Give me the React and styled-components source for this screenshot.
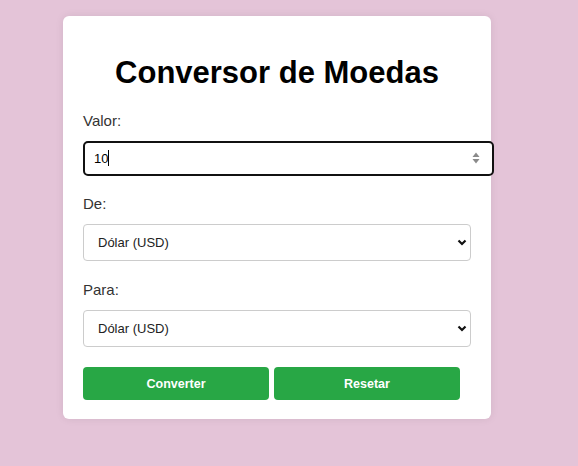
import styled, { createGlobalStyle } from "styled-components";

const GlobalStyle = createGlobalStyle`
  html, body {
    margin: 0;
    padding: 0;
    background: #e4c4d8;
    font-family: "Liberation Sans", Arial, sans-serif;
  }
`;

const Page = styled.div`
  width: 578px;
  height: 466px;
  padding-top: 16px;
  box-sizing: border-box;
`;

const Card = styled.div`
  margin-left: 63px;
  width: 428px;
  box-sizing: border-box;
  padding: 20px 20px 19px;
  background: #fff;
  border-radius: 6px;
  box-shadow: 0 0 8px rgba(0, 0, 0, 0.08);
`;

const Title = styled.h1`
  margin: 19px 0 21px;
  font-size: 31px;
  font-weight: bold;
  text-align: center;
  color: #000;
`;

const Label = styled.label`
  display: block;
  font-size: 15px;
  color: #333;
  margin-bottom: 12px;
`;

const Field = styled.div`
  position: relative;
  margin-bottom: ${(p) => p.$gap || 20}px;
`;

const NumberInput = styled.input`
  display: block;
  box-sizing: border-box;
  width: calc(100% + 23px);
  height: 35px;
  padding: 0 9px;
  border: 2px solid #111;
  border-radius: 5px;
  font-family: inherit;
  font-size: 13px;
  color: #000;
  outline: none;
  appearance: textfield;
  &::-webkit-inner-spin-button,
  &::-webkit-outer-spin-button {
    -webkit-appearance: none;
    margin: 0;
  }
`;

const Caret = styled.span`
  position: absolute;
  left: 25px;
  top: 9px;
  width: 1px;
  height: 16px;
  background: #000;
`;

const Spinner = styled.svg`
  position: absolute;
  left: 389px;
  top: 11px;
`;

const Select = styled.select`
  display: block;
  box-sizing: border-box;
  width: 100%;
  height: 37px;
  padding: 0 10px;
  border: 1px solid #ccc;
  border-radius: 4px;
  background: #fff;
  font-family: inherit;
  font-size: 13px;
  color: #222;
  appearance: none;
  text-indent: 4px;
`;

const Chevron = styled.svg`
  position: absolute;
  right: 4px;
  top: 15px;
  pointer-events: none;
`;

const Buttons = styled.div`
  display: flex;
  gap: 5px;
`;

const Button = styled.button`
  width: 186px;
  height: 33px;
  border: none;
  border-radius: 4px;
  background: #28a745;
  color: #fff;
  font-family: inherit;
  font-size: 12.5px;
  font-weight: bold;
  cursor: pointer;
`;

function Dropdown() {
  return (
    <>
      <Select defaultValue="USD">
        <option value="USD">Dólar (USD)</option>
        <option value="BRL">Real (BRL)</option>
        <option value="EUR">Euro (EUR)</option>
      </Select>
      <Chevron width="10" height="7" viewBox="0 0 10 7">
        <path d="M1.5 1.5 L5 5 L8.5 1.5" fill="none" stroke="#111" strokeWidth="2.2" />
      </Chevron>
    </>
  );
}

export default function App() {
  return (
    <Page>
      <GlobalStyle />
      <Card>
        <Title>Conversor de Moedas</Title>

        <Label>Valor:</Label>
        <Field $gap={19}>
          <NumberInput type="number" defaultValue="10" />
          <Caret />
          <Spinner width="8" height="12" viewBox="0 0 8 12">
            <path d="M4 0.5 L7.5 5 H0.5 Z" fill="#8a8a8a" />
            <path d="M4 11.5 L7.5 7 H0.5 Z" fill="#8a8a8a" />
          </Spinner>
        </Field>

        <Label>De:</Label>
        <Field>
          <Dropdown />
        </Field>

        <Label>Para:</Label>
        <Field $gap={20}>
          <Dropdown />
        </Field>

        <Buttons>
          <Button>Converter</Button>
          <Button>Resetar</Button>
        </Buttons>
      </Card>
    </Page>
  );
}
